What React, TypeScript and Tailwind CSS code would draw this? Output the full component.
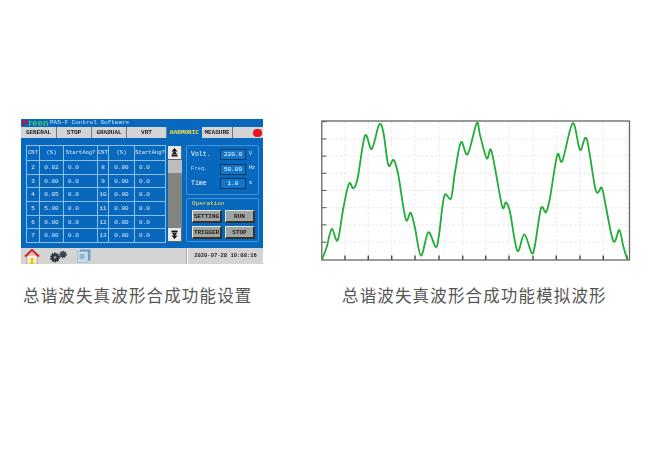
import React from "react";

const rows = [
  ["2", "0.02", "8"],
  ["3", "0.00", "9"],
  ["4", "0.05", "10"],
  ["5", "5.00", "11"],
  ["6", "0.00", "12"],
  ["7", "0.00", "13"],
];

const wavePoints = [
  [322.3, 259], [326.7, 247], [331.7, 229], [337.7, 240.3], [343.3, 208.3], [349, 183.7], [353.3, 188.3], [357.7, 178],
  [365, 135.7], [371.7, 149], [379, 125], [383.3, 132], [388.3, 165], [393.7, 160], [398.3, 175], [405.7, 219],
  [410.7, 212.7], [415, 228], [421, 255.7], [428.3, 232.3], [435.7, 247], [439, 235], [444.3, 196], [451, 198.3],
  [455, 172], [461, 142.3], [467.7, 154.3], [476.7, 123.3], [480, 135], [486.7, 158.3], [490.7, 149.3], [495, 168],
  [502.3, 206.7], [506, 202.3], [510, 212], [517.3, 250.7], [524.3, 234.3], [531.7, 253], [535, 245], [541, 208.3],
  [546, 212.3], [550, 198], [557.3, 155], [562.3, 161], [572.7, 123.3], [580, 150], [586.7, 139], [595.7, 190],
  [601.7, 187.7], [605, 202], [613.3, 241], [619.3, 230], [623, 245], [626.7, 258],
];

// smooth line through the traced points, in chart coords
const wavePath = () => {
  const p = wavePoints.map(([x, y]) => [x - 321, y - 119]);
  let d = `M${p[0][0]} ${p[0][1]}`;
  for (let i = 0; i < p.length - 1; i++) {
    const a = p[Math.max(i - 1, 0)];
    const b = p[i];
    const c = p[i + 1];
    const e = p[Math.min(i + 2, p.length - 1)];
    d += ` C${(b[0] + (c[0] - a[0]) / 6).toFixed(1)} ${(b[1] + (c[1] - a[1]) / 6).toFixed(1)} ${(c[0] - (e[0] - b[0]) / 6).toFixed(1)} ${(c[1] - (e[1] - b[1]) / 6).toFixed(1)} ${c[0]} ${c[1]}`;
  }
  return d;
};

const hTicks = [24, 47.3, 70.7, 94, 118, 141.7, 164.7, 188, 212, 235.3, 259, 282.3, 306];
const vTicks = [2.7, 19.9, 37.1, 54.3, 71.5, 88.7, 105.9, 123.1];

const Chart = () => (
  <svg width="310" height="144" viewBox="0 0 310 144" className="block">
    {hTicks.map((x) => (
      <line key={x} x1={x} x2={x} y1="3" y2="140" stroke="#e2e2e2" strokeWidth="0.8" strokeDasharray="2.5 2" />
    ))}
    {vTicks.map((y) => (
      <line key={y} x1="1" x2="308" y1={y} y2={y} stroke="#e2e2e2" strokeWidth="0.8" strokeDasharray="2.5 2" />
    ))}
    {hTicks.map((x) => (
      <line key={x} x1={x} x2={x} y1="136.5" y2="141" stroke="#444" strokeWidth="1.4" />
    ))}
    {vTicks.map((y) => (
      <line key={y} x1="1" x2="5.5" y1={y} y2={y} stroke="#555" strokeWidth="1" />
    ))}
    <rect x="0.8" y="2" width="307.7" height="139" fill="none" stroke="#666" strokeWidth="1.3" />
    <path d={wavePath()} fill="none" stroke="#22ac38" strokeWidth="1.8" />
  </svg>
);

const Arrow = ({ down }: { down?: boolean }) => (
  <svg width="7" height="9" viewBox="0 0 7 9" className={down ? "rotate-180" : ""}>
    <path d="M3.5 0 L6.5 3.5 H0.5 Z M3.5 3 L6.5 6.5 H0.5 Z" fill="#111" />
    <rect x="0.5" y="7" width="6" height="1.4" fill="#111" />
  </svg>
);

const Field = ({ label, value, unit, dim }: { label: string; value: string; unit: string; dim?: boolean }) => (
  <div className="flex items-center h-[11px]">
    <span className={`w-[33px] pl-[4px] ${dim ? "text-[#bcdcf4] text-[5.5px]" : "text-[6.5px]"}`}>{label}</span>
    <span className="w-[26px] h-[11px] border border-[#07365f] bg-[#0f76cc] flex items-center justify-center text-[6px]">{value}</span>
    <span className="ml-[3px] text-[5px]">{unit}</span>
  </div>
);

const OpButton = ({ label }: { label: string }) => (
  <div className="w-[30px] h-[13px] bg-[#a0a5a0] border-t border-l border-[#e8e8e8] border-r-2 border-b-2 border-r-[#333] border-b-[#333] flex items-center justify-center text-[6px] font-bold text-[#1c1c1c]">
    {label}
  </div>
);

const Tab = ({ label, width }: { label: string; width: string }) => (
  <div className={`${width} h-full flex items-center justify-center border-r border-[#777] text-[6px] text-[#222] font-bold`}>{label}</div>
);

const Panel = () => (
  <div className="w-[242px] h-[145px] flex flex-col font-['Liberation_Mono',monospace] text-white blur-[0.35px]">
    <div className="h-[8px] bg-[#0868bd] flex items-center text-[6px] leading-none">
      <span className="font-['Liberation_Sans',sans-serif] font-bold text-[9px] tracking-[0.4px] text-[#45c468] ml-[1px] w-[28px]">
        <span className="text-[#e60012]">P</span>reen
      </span>
      <span className="text-[#cfe6f8]">PAS-F Control Software</span>
    </div>
    <div className="h-[11px] bg-[#d4d4d4] flex items-center">
      <Tab label="GENERAL" width="w-[36px]" />
      <Tab label="STOP" width="w-[35px]" />
      <Tab label="GRADUAL" width="w-[35px]" />
      <Tab label="VRT" width="w-[40px]" />
      <div className="w-[35px] h-full bg-[#0868bd] flex items-center justify-center text-[6px] font-bold text-[#f4e34a]">HARMONIC</div>
      <Tab label="MEASURE" width="w-[31px]" />
      <div className="flex-1 flex justify-end pr-[1px]">
        <div className="w-[9px] h-[8px] rounded-full bg-[#e8141c]"></div>
      </div>
    </div>
    <div className="h-[110px] bg-[#0868bd] flex pl-[5px] pt-[7px] text-[6px]">
      <table className="w-[139px] h-[97px] table-fixed border-collapse text-[#e2effa]">
        <colgroup>
          <col className="w-[13px]" />
          <col className="w-[24px]" />
          <col className="w-[34px]" />
          <col className="w-[11px]" />
          <col className="w-[26px]" />
          <col className="w-[31px]" />
        </colgroup>
        <tbody>
          <tr className="h-[15px] text-[5.5px]">
            {["CNT", "(%)", "StartAng?", "CNT", "(%)", "StartAng?"].map((h, i) => (
              <td key={i} className="border border-[#8fc0e8] text-center p-0 overflow-hidden whitespace-nowrap">{h}</td>
            ))}
          </tr>
          {rows.map(([a, b, c]) => (
            <tr key={a} className="h-[13.7px]">
              <td className="border border-[#8fc0e8] text-center p-0">{a}</td>
              <td className="border border-[#8fc0e8] text-center p-0">{b}</td>
              <td className="border border-[#8fc0e8] pl-[4px] p-0">0.0</td>
              <td className="border border-[#8fc0e8] text-center p-0">{c}</td>
              <td className="border border-[#8fc0e8] text-center p-0">0.00</td>
              <td className="border border-[#8fc0e8] pl-[4px] p-0">0.0</td>
            </tr>
          ))}
        </tbody>
      </table>
      <div className="ml-[2px] w-[14px] h-[96px] mt-[1px] flex flex-col bg-[#808580]">
        <div className="h-[14px] bg-[#e8e8e8] border-r border-b border-[#666] flex items-center justify-center">
          <Arrow />
        </div>
        <div className="h-[13px] bg-[#bdbdbd]"></div>
        <div className="flex-1"></div>
        <div className="h-[14px] bg-[#e8e8e8] border-r border-b border-[#666] flex items-center justify-center">
          <Arrow down />
        </div>
      </div>
      <div className="ml-[4px] w-[73px] flex flex-col gap-[3px]">
        <div className="h-[50px] border border-[#3f93da] rounded-[2px] flex flex-col pt-[3px] gap-[3.5px]">
          <Field label="Volt." value="220.0" unit="V" />
          <Field label="Freq." value="50.00" unit="Hz" dim />
          <Field label="Time" value="1.0" unit="s" />
        </div>
        <div className="h-[44px] border border-[#3f93da] rounded-[2px] pl-[5px] pt-[1px]">
          <div className="text-[#f4e34a] text-[6px] leading-[8px] mb-[2px]">Operation</div>
          <div className="grid grid-cols-[30px_30px] gap-x-[3px] gap-y-[3px]">
            <OpButton label="SETTING" />
            <OpButton label="RUN" />
            <OpButton label="TRIGGER" />
            <OpButton label="STOP" />
          </div>
        </div>
      </div>
    </div>
    <div className="h-[16px] bg-[#d4d4d4] flex items-center">
      <div className="w-[165px] flex items-center pl-[3px]">
        <svg width="16" height="15" viewBox="0 0 16 15">
          <rect x="3" y="6" width="10" height="9" fill="#fff7e0" stroke="#b55" strokeWidth="0.5" />
          <rect x="6.5" y="9" width="3" height="6" fill="#f2c200" />
          <path d="M1 7.5 L8 1 L15 7.5" fill="none" stroke="#d81e1e" strokeWidth="2" />
        </svg>
        <svg width="19" height="13" viewBox="0 0 19 13" className="ml-[9px]">
          <circle cx="6" cy="7.5" r="4" fill="#2f3841" stroke="#2f3841" strokeWidth="2" strokeDasharray="1.5 1" />
          <circle cx="6" cy="7.5" r="1.4" fill="#8a939a" />
          <circle cx="14" cy="4.5" r="3" fill="#3c464e" stroke="#3c464e" strokeWidth="1.6" strokeDasharray="1.2 1" />
        </svg>
        <svg width="14" height="14" viewBox="0 0 14 14" className="ml-[9px]">
          <rect x="3" y="0.5" width="10.5" height="11" fill="#6f9dc4" />
          <rect x="0.5" y="2.5" width="10.5" height="11" fill="#c6dcec" stroke="#8fb0c9" strokeWidth="0.5" />
          <rect x="2.5" y="5" width="5" height="5" fill="#8fb6d4" />
        </svg>
      </div>
      <div className="h-full w-[2px] bg-[#aaa] border-r border-white"></div>
      <div className="flex-1 text-center text-[5.5px] text-[#222] font-bold">2020-07-28 10:08:16</div>
    </div>
  </div>
);

const Caption = ({ children }: { children: React.ReactNode }) => (
  <div className="text-[16.5px] leading-[24px] tracking-[1.15px] whitespace-nowrap text-[#555] font-['Noto_Sans_CJK_SC','Noto_Sans',sans-serif] font-normal">
    {children}
  </div>
);

export default function App() {
  return (
    <div className="w-[650px] h-[450px] bg-white overflow-hidden flex pt-[119px]">
      <div className="w-[321px] pl-[21px] flex flex-col">
        <Panel />
        <div className="mt-[19px] pl-[2px]">
          <Caption>总谐波失真波形合成功能设置</Caption>
        </div>
      </div>
      <div className="flex flex-col">
        <Chart />
        <div className="mt-[20px] pl-[21px]">
          <Caption>总谐波失真波形合成功能模拟波形</Caption>
        </div>
      </div>
    </div>
  );
}
